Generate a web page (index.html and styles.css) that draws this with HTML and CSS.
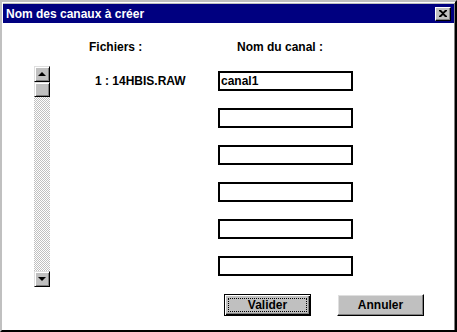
FILE: index.html
```html
<!DOCTYPE html>
<html lang="fr">
<head>
  <meta charset="UTF-8" />
  <title>Nom des canaux à créer</title>
  <link rel="stylesheet" href="styles.css">
</head>
<body>
  <div class="window">
    <div class="titlebar">
      <span class="title">Nom des canaux à créer</span>
      <button class="close" aria-label="Fermer">
        <svg width="8" height="7" viewBox="0 0 8 7">
          <path d="M0 0h2l2 2 2-2h2v1L5 3.5 8 6v1H6L4 5 2 7H0V6l3-2.5L0 1z" fill="#000"/>
        </svg>
      </button>
    </div>

    <div class="content">
      <div class="grid">
        <div></div>
        <div class="head head-files">Fichiers :</div>
        <div class="head head-names">Nom du canal :</div>

        <div class="scrollbar">
          <div class="sb-btn"><span class="arrow-up"></span></div>
          <div class="sb-thumb"></div>
          <div class="sb-track"></div>
          <div class="sb-btn"><span class="arrow-down"></span></div>
        </div>

        <div class="files">
          <div class="file">1 : 14HBIS.RAW</div>
        </div>

        <div class="fields">
          <input type="text" class="field" value="canal1" readonly />
          <input type="text" class="field" readonly />
          <input type="text" class="field" readonly />
          <input type="text" class="field" readonly />
          <input type="text" class="field" readonly />
          <input type="text" class="field" readonly />
        </div>
      </div>

      <div class="actions">
        <button class="btn default"><span class="focus">Valider</span></button>
        <button class="btn">Annuler</button>
      </div>
    </div>
  </div>
</body>
</html>
```

FILE: styles.css
```css
* {
  box-sizing: border-box;
}

body {
  margin: 0;
  font-family: "Liberation Sans", Arial, sans-serif;
  font-size: 12px;
  font-weight: bold;
  background: #c0c0c0;
}

.window {
  width: 457px;
  height: 332px;
  display: flex;
  flex-direction: column;
  background: #c0c0c0;
  border: 2px solid;
  border-color: #c0c0c0 #000 #000 #c0c0c0;
  box-shadow: inset 1px 1px #fff, inset -1px -1px #808080;
  padding: 2px 1px 0 1px;
}

.titlebar {
  height: 19px;
  background: #000080;
  color: #fff;
  display: flex;
  align-items: center;
  justify-content: space-between;
  padding: 0 3px 0 3px;
}

.title {
  line-height: 14px;
}

.close {
  width: 16px;
  height: 14px;
  padding: 0;
  margin: 0;
  background: #c0c0c0;
  border: 1px solid;
  border-color: #fff #000 #000 #fff;
  box-shadow: inset -1px -1px #808080;
  display: flex;
  align-items: center;
  justify-content: center;
}

.content {
  flex: 1;
  background: #fff;
  padding: 17px 0 0 31px;
}

.grid {
  display: grid;
  grid-template-columns: 16px 168px 135px;
  grid-template-rows: 14px 221px;
  row-gap: 12px;
}

.head {
  line-height: 14px;
  color: #000;
}

.head-files {
  padding-left: 39px;
}

.head-names {
  padding-left: 19px;
}

.scrollbar {
  display: flex;
  flex-direction: column;
}

.sb-btn,
.sb-thumb {
  background: #c0c0c0;
  border: 1px solid;
  border-color: #dfdfdf #000 #000 #dfdfdf;
  box-shadow: inset 1px 1px #fff, inset -1px -1px #808080;
}

.sb-btn {
  height: 16px;
  display: flex;
  align-items: center;
  justify-content: center;
}

.sb-thumb {
  height: 15px;
}

.sb-track {
  flex: 1;
  background: repeating-conic-gradient(#c0c0c0 0 25%, #fff 0 50%) 0 0 / 2px 2px;
}

.arrow-up,
.arrow-down {
  width: 0;
  height: 0;
  border-left: 4px solid transparent;
  border-right: 4px solid transparent;
}

.arrow-up {
  border-bottom: 4px solid #000;
}

.arrow-down {
  border-top: 4px solid #000;
}

.files {
  padding: 8px 0 0 45px;
}

.file {
  line-height: 14px;
}

.fields {
  display: flex;
  flex-direction: column;
  gap: 17px;
  padding-top: 5px;
}

.field {
  width: 135px;
  height: 20px;
  border: 2px solid #000;
  padding: 0 1px;
  font: inherit;
  color: #000;
  background: #fff;
  outline: none;
}

.actions {
  display: flex;
  gap: 26px;
  padding: 7px 0 0 190px;
}

.btn {
  width: 87px;
  height: 22px;
  padding: 0;
  font: inherit;
  color: #000;
  background: #c0c0c0;
  border: 1px solid;
  border-color: #fff #000 #000 #fff;
  box-shadow: inset -1px -1px #808080, inset 1px 1px #dfdfdf;
}

.btn.default {
  border: 1px solid #000;
  box-shadow: inset 1px 1px #fff, inset -1px -1px #000, inset -2px -2px #808080;
  padding: 3px;
}

.focus {
  display: block;
  height: 100%;
  border: 1px dotted #000;
  line-height: 12px;
}
```
